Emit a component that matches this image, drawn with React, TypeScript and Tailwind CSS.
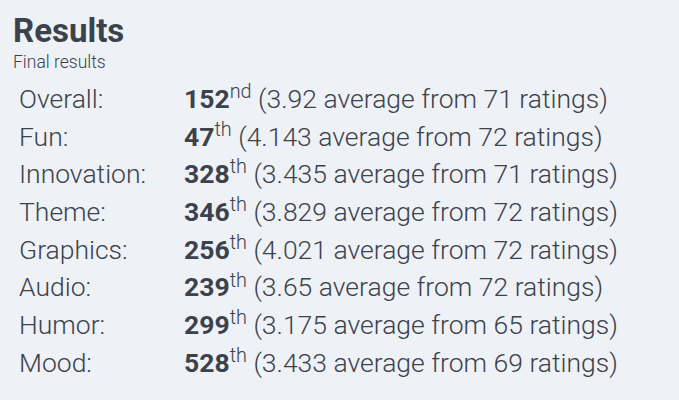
const rows = [
  { label: 'Overall:', rank: '152', suf: 'nd', avg: '3.92', n: 71 },
  { label: 'Fun:', rank: '47', suf: 'th', avg: '4.143', n: 72 },
  { label: 'Innovation:', rank: '328', suf: 'th', avg: '3.435', n: 71 },
  { label: 'Theme:', rank: '346', suf: 'th', avg: '3.829', n: 72 },
  { label: 'Graphics:', rank: '256', suf: 'th', avg: '4.021', n: 72 },
  { label: 'Audio:', rank: '239', suf: 'th', avg: '3.65', n: 72 },
  { label: 'Humor:', rank: '299', suf: 'th', avg: '3.175', n: 65 },
  { label: 'Mood:', rank: '528', suf: 'th', avg: '3.433', n: 69 },
]

export default function App() {
  return (
    <div
      className="w-[679px] h-[400px] bg-[#eef1f6] text-[#3b424b] pl-[13px] pt-[13px] overflow-hidden"
      style={{ fontFamily: 'Roboto, "Liberation Sans", sans-serif' }}
    >
      <h2 className="text-[33px] font-bold leading-[36px]">Results</h2>
      <div className="mt-[3px] text-[17.5px] font-light leading-[20px]">Final results</div>
      <div className="mt-[8px] pl-[6px]">
        {rows.map((r) => (
          <div key={r.label} className="flex h-[37.7px] items-center text-[26.5px] font-light leading-[37.7px] whitespace-nowrap">
            <span className="w-[165px] shrink-0">{r.label}</span>
            <span>
              <strong className="font-bold">{r.rank}</strong>
              <sup>{r.suf}</sup> ({r.avg} average from {r.n} ratings)
            </span>
          </div>
        ))}
      </div>
    </div>
  )
}
